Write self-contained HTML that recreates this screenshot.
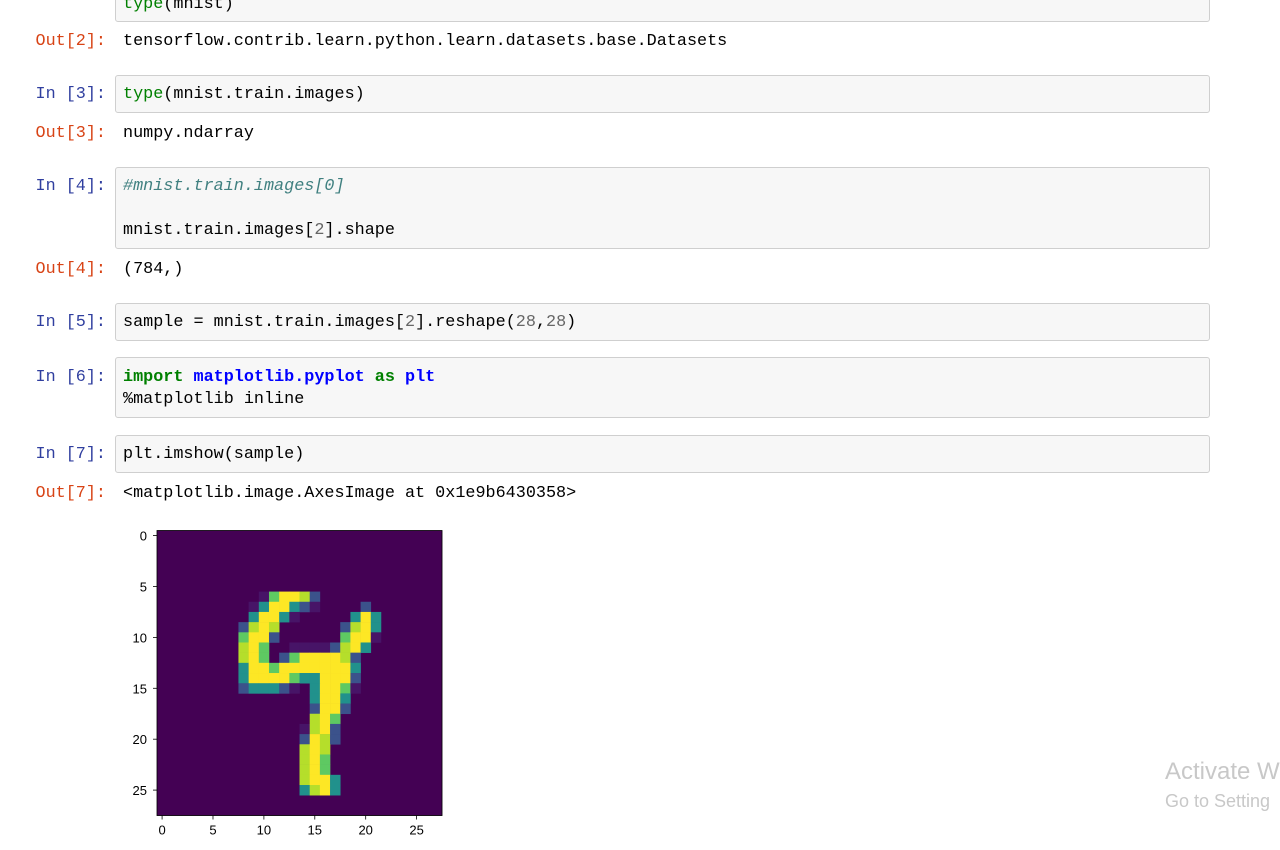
<!DOCTYPE html>
<html><head><meta charset="utf-8"><style>
body{margin:0;width:1280px;height:850px;background:#fff;overflow:hidden;position:relative;font-family:"Liberation Mono",monospace;font-size:16.8px;}
.p{position:absolute;left:0;width:106px;text-align:right;line-height:22px;white-space:pre;margin-top:2px}
.in{color:#303f9f}.out{color:#d84315}
.box{position:absolute;left:115px;width:1093px;background:#f7f7f7;border:1px solid #cfcfcf;border-radius:3px}
.t{position:absolute;left:123px;line-height:22px;white-space:pre;color:#000;margin-top:2px}
.g{color:#008000}.kw{color:#008000;font-weight:bold}.b{color:#0000ff;font-weight:bold}.c{color:#408080;font-style:italic}.n{color:#666}
.wm{position:absolute;left:1165px;color:#c8c8c8;font-family:"Liberation Sans",sans-serif;white-space:nowrap}
</style></head><body>
<div class="box" style="top:-10px;height:30px"></div>
<div class="t" style="top:-8px"><span class="g">type</span>(mnist)</div>
<div class="p out" style="top:29px">Out[2]:</div>
<div class="t" style="top:29px">tensorflow.contrib.learn.python.learn.datasets.base.Datasets</div>

<div class="p in" style="top:82px">In [3]:</div>
<div class="box" style="top:75px;height:36px"></div>
<div class="t" style="top:82px"><span class="g">type</span>(mnist.train.images)</div>
<div class="p out" style="top:121px">Out[3]:</div>
<div class="t" style="top:121px">numpy.ndarray</div>

<div class="p in" style="top:174px">In [4]:</div>
<div class="box" style="top:167px;height:80px"></div>
<div class="t" style="top:174px"><span class="c">#mnist.train.images[0]</span><br><br>mnist.train.images[<span class="n">2</span>].shape</div>
<div class="p out" style="top:257px">Out[4]:</div>
<div class="t" style="top:257px">(784,)</div>

<div class="p in" style="top:310px">In [5]:</div>
<div class="box" style="top:303px;height:36px"></div>
<div class="t" style="top:310px">sample = mnist.train.images[<span class="n">2</span>].reshape(<span class="n">28</span>,<span class="n">28</span>)</div>

<div class="p in" style="top:365px">In [6]:</div>
<div class="box" style="top:357px;height:59px"></div>
<div class="t" style="top:365px"><span class="kw">import</span> <span class="b">matplotlib.pyplot</span> <span class="kw">as</span> <span class="b">plt</span><br>%matplotlib inline</div>

<div class="p in" style="top:442px">In [7]:</div>
<div class="box" style="top:435px;height:36px"></div>
<div class="t" style="top:442px">plt.imshow(sample)</div>
<div class="p out" style="top:481px">Out[7]:</div>
<div class="t" style="top:481px">&lt;matplotlib.image.AxesImage at 0x1e9b6430358&gt;</div>

<svg id="plot" style="position:absolute;left:0;top:0" width="500" height="850"></svg>

<div class="wm" style="top:758px;font-size:24px">Activate W</div>
<div class="wm" style="top:791px;font-size:18px">Go to Setting</div>

<script>
var C=['#440154','#471467','#3b528b','#21918c','#5ec962','#b5de2b','#fde725'];
var rows={
6:{10:1,11:4,12:6,13:6,14:5,15:2},
7:{9:1,10:3,11:6,12:6,13:3,14:2,15:1,20:2},
8:{9:3,10:6,11:6,12:3,13:1,19:3,20:6,21:3},
9:{8:2,9:5,10:6,11:5,18:2,19:5,20:6,21:3},
10:{8:4,9:6,10:6,11:2,18:4,19:6,20:6,21:1},
11:{8:5,9:6,10:4,13:1,14:1,15:1,16:1,17:2,18:5,19:6,20:3},
12:{8:5,9:6,10:4,12:2,13:4,14:6,15:6,16:6,17:6,18:5,19:2},
13:{8:3,9:6,10:6,11:4,12:6,13:6,14:6,15:6,16:6,17:6,18:6,19:3},
14:{8:3,9:6,10:6,11:6,12:6,13:4,14:3,15:3,16:6,17:6,18:6,19:2},
15:{8:2,9:3,10:3,11:3,12:2,13:1,15:3,16:6,17:6,18:4,19:1},
16:{15:3,16:6,17:6,18:3},
17:{15:2,16:6,17:6,18:2},
18:{15:5,16:6,17:4},
19:{14:1,15:5,16:6,17:2},
20:{14:2,15:6,16:5,17:2},
21:{14:5,15:6,16:5},
22:{14:5,15:6,16:4},
23:{14:5,15:6,16:4},
24:{14:5,15:6,16:6,17:3},
25:{14:3,15:5,16:6,17:3}};
var x0=157,y0=530.5,s=10.18,h='';
h+='<rect x="'+x0+'" y="'+y0+'" width="'+(28*s)+'" height="'+(28*s)+'" fill="'+C[0]+'"/>';
for(var r in rows)for(var c in rows[r]){h+='<rect x="'+(x0+c*s)+'" y="'+(y0+r*s)+'" width="'+(s+0.3)+'" height="'+(s+0.3)+'" fill="'+C[rows[r][c]]+'"/>';}
h+='<rect x="'+x0+'" y="'+y0+'" width="'+(28*s)+'" height="'+(28*s)+'" fill="none" stroke="#000" stroke-width="0.8"/>';
for(var v=0;v<=25;v+=5){var y=y0+(v+0.5)*s,x=x0+(v+0.5)*s;
h+='<line x1="'+(x0-4)+'" x2="'+x0+'" y1="'+y+'" y2="'+y+'" stroke="#000" stroke-width="0.8"/>';
h+='<text x="'+(x0-10)+'" y="'+(y+5)+'" font-family="Liberation Sans,sans-serif" font-size="13" text-anchor="end">'+v+'</text>';
h+='<line x1="'+x+'" x2="'+x+'" y1="'+(y0+28*s)+'" y2="'+(y0+28*s+4)+'" stroke="#000" stroke-width="0.8"/>';
h+='<text x="'+x+'" y="'+(y0+28*s+19)+'" font-family="Liberation Sans,sans-serif" font-size="13" text-anchor="middle">'+v+'</text>';}
document.getElementById('plot').innerHTML=h;
</script>
</body></html>
